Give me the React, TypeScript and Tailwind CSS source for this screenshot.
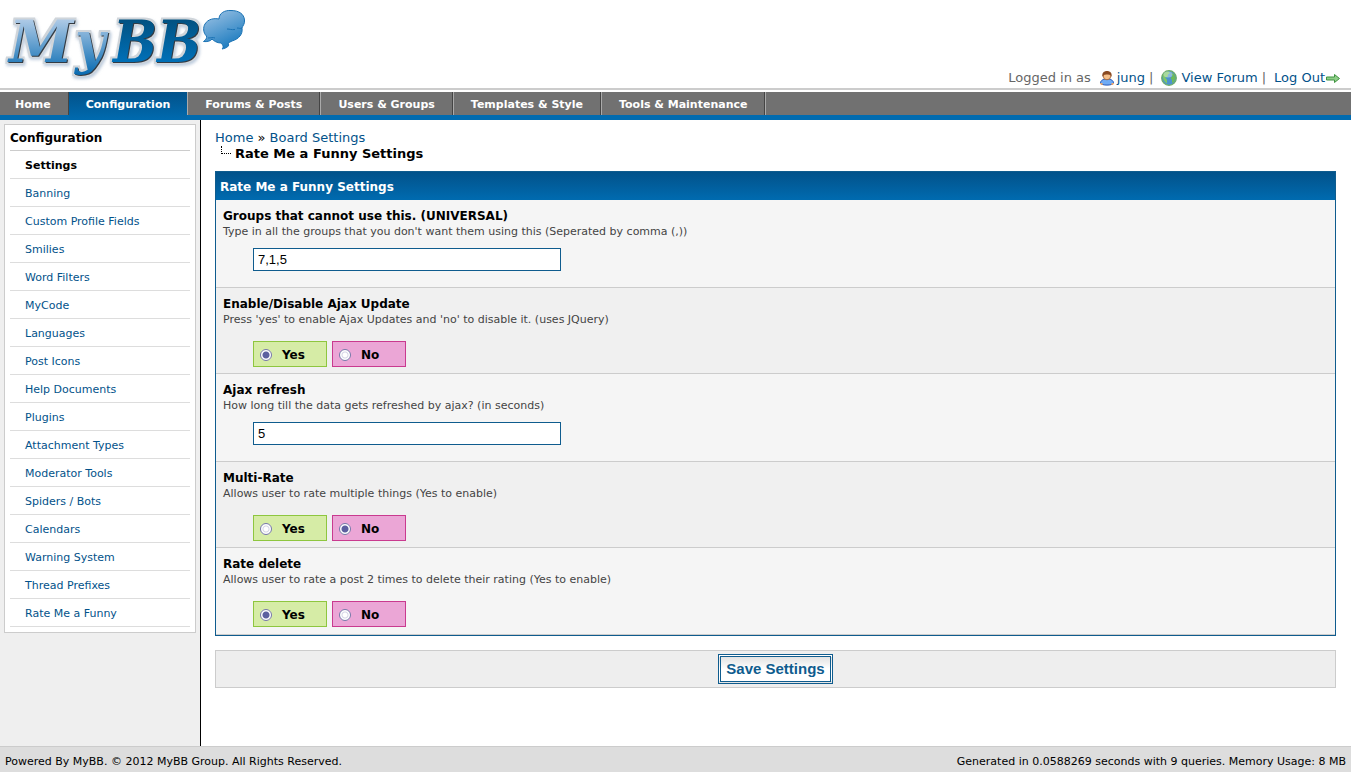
import React, { useState } from 'react';
import clsx from 'clsx';

const tabs = ['Home', 'Configuration', 'Forums & Posts', 'Users & Groups', 'Templates & Style', 'Tools & Maintenance'];

const menuItems = [
  'Settings',
  'Banning',
  'Custom Profile Fields',
  'Smilies',
  'Word Filters',
  'MyCode',
  'Languages',
  'Post Icons',
  'Help Documents',
  'Plugins',
  'Attachment Types',
  'Moderator Tools',
  'Spiders / Bots',
  'Calendars',
  'Warning System',
  'Thread Prefixes',
  'Rate Me a Funny',
];

interface Setting {
  id: string;
  title: string;
  description: string;
  type: 'text' | 'yesno';
  value: string;
}

const settings: Setting[] = [
  {
    id: 'groups',
    title: 'Groups that cannot use this. (UNIVERSAL)',
    description: "Type in all the groups that you don't want them using this (Seperated by comma (,))",
    type: 'text',
    value: '7,1,5',
  },
  {
    id: 'ajax',
    title: 'Enable/Disable Ajax Update',
    description: "Press 'yes' to enable Ajax Updates and 'no' to disable it. (uses JQuery)",
    type: 'yesno',
    value: 'yes',
  },
  {
    id: 'refresh',
    title: 'Ajax refresh',
    description: 'How long till the data gets refreshed by ajax? (in seconds)',
    type: 'text',
    value: '5',
  },
  {
    id: 'multirate',
    title: 'Multi-Rate',
    description: 'Allows user to rate multiple things (Yes to enable)',
    type: 'yesno',
    value: 'no',
  },
  {
    id: 'delete',
    title: 'Rate delete',
    description: 'Allows user to rate a post 2 times to delete their rating (Yes to enable)',
    type: 'yesno',
    value: 'yes',
  },
];

function Logo() {
  return (
    <svg width="250" height="84" viewBox="0 0 250 84" role="img" aria-label="MyBB">
      <defs>
        <linearGradient id="light" gradientUnits="userSpaceOnUse" x1="0" y1="18" x2="0" y2="74">
          <stop offset="0" stopColor="#b3cde8" />
          <stop offset="1" stopColor="#0a6cb2" />
        </linearGradient>
        <linearGradient id="dark" gradientUnits="userSpaceOnUse" x1="0" y1="18" x2="0" y2="62">
          <stop offset="0" stopColor="#02507f" />
          <stop offset="1" stopColor="#0070b8" />
        </linearGradient>
        <linearGradient id="bubble" x1="0" y1="0" x2="0.5" y2="1">
          <stop offset="0" stopColor="#a3c6e6" />
          <stop offset="1" stopColor="#1f7dc0" />
        </linearGradient>
        {/* Grey rim, dark edge at the lower right and a faint shadow */}
        <filter id="rim" filterUnits="userSpaceOnUse" x="0" y="0" width="250" height="84" colorInterpolationFilters="sRGB">
          <feMorphology in="SourceAlpha" operator="dilate" radius="2" result="wide" />
          <feGaussianBlur in="wide" stdDeviation="0.500" result="wideSoft" />
          <feFlood floodColor="#d0d5da" />
          <feComposite in2="wideSoft" operator="in" result="outline" />
          <feGaussianBlur in="wide" stdDeviation="1.500" />
          <feOffset dx="1" dy="2" result="cast" />
          <feFlood floodColor="#8fa9c6" floodOpacity="0.600" />
          <feComposite in2="cast" operator="in" result="shadow" />
          <feOffset in="SourceAlpha" dx="1" dy="1" result="moved" />
          <feFlood floodColor="#333b44" />
          <feComposite in2="moved" operator="in" result="edge" />
          <feMerge>
            <feMergeNode in="shadow" />
            <feMergeNode in="outline" />
            <feMergeNode in="edge" />
            <feMergeNode in="SourceGraphic" />
          </feMerge>
        </filter>
      </defs>
      <g filter="url(#rim)" className="font-['DejaVu_Serif_Condensed','DejaVu_Serif',serif] text-[58px] font-bold italic">
        <text x="9" y="62" fill="url(#light)" className="font-['DejaVu_Serif',serif]">M</text>
        <text x="75" y="62" fill="url(#light)">y</text>
        <text x="113" y="62" fill="url(#dark)">BB</text>
      </g>
      <path
        d="M219 19C219 13 225 10 231 10.500C239 10.500 244 14 244.500 20C245 24 242.500 26 242 28C243 34 239 39 232 41L228 43C230 46 227 48 222 49C224 47 223 45 221 43C217 43 214 41 212 39C211 41 207 42 203.500 41.500C206 40 207 38 206.500 36C203 33 203 27 205 24C208 19 214 18 219 19Z"
        fill="url(#bubble)"
        stroke="#1a72b4"
        strokeWidth="1"
      />
      <path d="M227 29C230 29 231 30 235 29.500M237 28C239 28 240 29 242 28M208 38C211 38 213 37 215 38" fill="none" stroke="#1a72b4" />
    </svg>
  );
}

function UserIcon() {
  return (
    <svg width="16" height="16" viewBox="0 0 16 16" aria-hidden="true">
      <path d="M1.500 13C1.500 10.500 4 9 8 9S14.500 10.500 14.500 13C13.500 15.800 2.500 15.800 1.500 13Z" fill="#6fabf5" stroke="#2858b8" />
      <path d="M1 13h2.500v2H2zM12.500 13H15l-1 2h-1.500z" fill="#eda66b" />
      <circle cx="8" cy="6" r="3.800" fill="#f6c08a" stroke="#9c5a2c" strokeWidth="0.800" />
      <path d="M3.500 7C2.500 3 5 1 8 1s5.500 2 4.500 6C12 5 11 4.300 8 4.500S4.500 5 3.500 7Z" fill="#8a4a22" />
    </svg>
  );
}

function GlobeIcon() {
  return (
    <svg width="16" height="16" viewBox="0 0 16 16" aria-hidden="true">
      <circle cx="8" cy="8" r="7.300" fill="#4d93cf" stroke="#6fae68" strokeWidth="1.300" />
      <path d="M2 5C3 3 5 1.500 7.500 1.500L9 3L7 4.500L6.500 7L4 7.500L6 9.500L6 13.500C3 12 1.500 9 2 5Z" fill="#7cc768" />
      <path d="M10 3L13 4L14.500 8L13 12L11 13L11 10L9.500 8L11.500 6Z" fill="#6cbb58" />
      <ellipse cx="7" cy="4.500" rx="4.500" ry="3" fill="#fff" opacity="0.350" />
    </svg>
  );
}

function ArrowIcon() {
  return (
    <svg width="16" height="16" viewBox="0 0 16 16" aria-hidden="true">
      <path d="M1.500 7H9.500V4.500L14.500 8.500L9.500 12.500V10H1.500Z" fill="#8fce88" stroke="#3f9440" strokeWidth="1" />
    </svg>
  );
}

function YesNo({ setting }: { setting: Setting }) {
  const [value, setValue] = useState(setting.value);
  return (
    <div className="flex gap-[5px] pt-[14px] pl-[30px]">
      {['yes', 'no'].map((option) => (
        <label
          key={option}
          className={clsx(
            'flex h-[26px] w-[74px] items-center border pt-[2px] pl-[6px] text-[12px] font-bold',
            option === 'yes' ? 'border-[#8ec63f] bg-[#d6eca6]' : 'border-[#c93a8f] bg-[#eba6d6]'
          )}
        >
          <input
            type="radio"
            name={setting.id}
            checked={value === option}
            onChange={() => setValue(option)}
            className="mr-[10px] h-3 w-3 appearance-none rounded-full border border-[#7576a8] bg-white bg-[radial-gradient(circle,#fff_2px,#d5d5e6_3px,#fff_4px)] checked:bg-[radial-gradient(circle,#5c5fa0_2px,#5c5fa0_3px,#fff_4px)]"
          />
          {option === 'yes' ? 'Yes' : 'No'}
        </label>
      ))}
    </div>
  );
}

export default function App() {
  return (
    <div className="flex min-h-screen flex-col bg-white font-['DejaVu_Sans',Verdana,sans-serif] text-[13px] leading-4 text-black">
      {/* Header */}
      <header className="flex h-[90px] items-start justify-between border-b-2 border-[#ccc]">
        <a href="#home">
          <Logo />
        </a>
        <div className="flex items-center self-end pr-[10px] pb-[2px] text-[#666]">
          <span className="mr-2">Logged in as</span>
          <a href="#jung" className="flex items-center gap-[2px] text-[#02528a]">
            <UserIcon />
            jung
          </a>
          <span className="mr-2 ml-1">|</span>
          <a href="#forum" className="flex items-center gap-1 text-[#02528a]">
            <GlobeIcon />
            View Forum
          </a>
          <span className="mr-2 ml-1">|</span>
          <a href="#logout" className="flex items-center text-[#02528a]">
            Log Out
            <ArrowIcon />
          </a>
        </div>
      </header>

      {/* Main tabs */}
      <nav className="mt-[2px] flex h-7 bg-[linear-gradient(#717171_23px,#006bb0_23px)] text-[11px] font-bold text-white">
        {tabs.map((tab) => (
          <a
            key={tab}
            href="#tab"
            className={clsx(
              'flex px-[17px] pt-[5px] first:pl-[15px]',
              tab === 'Configuration'
                ? 'bg-linear-to-b from-[#02528a] to-[#006bb0]'
                : 'h-[23px] border-r border-l border-r-[#444] border-l-[#aaa] first:border-l-0'
            )}
          >
            {tab}
          </a>
        ))}
        <span className="h-[23px] border-l border-[#aaa]" />
      </nav>

      <div className="flex grow">
        {/* Sidebar */}
        <aside className="w-[201px] shrink-0 border-r border-black bg-[#efefef] p-1 text-[11px]">
          <div className="border border-[#ccc] bg-white p-[5px]">
            <h2 className="border-b border-[#ccc] pb-1 text-[12px] font-bold">Configuration</h2>
            <ul>
              {menuItems.map((item, i) => (
                <li key={item} className="border-b border-[#ddd]">
                  <a href="#item" className={clsx('block pt-[6px] pb-1 pl-[15px] leading-[17px]', i === 0 ? 'font-bold' : 'text-[#02528a]')}>
                    {item}
                  </a>
                </li>
              ))}
            </ul>
          </div>
        </aside>

        {/* Page */}
        <main className="grow px-[15px] pt-[10px] pl-[14px]">
          <div>
            <a href="#home" className="text-[#02528a]">Home</a> » <a href="#board" className="text-[#02528a]">Board Settings</a>
          </div>
          <div className="flex pl-[6px] font-bold">
            <span className="mr-1 h-2 w-[10px] border-b border-l border-dotted border-black" />
            <h1>Rate Me a Funny Settings</h1>
          </div>

          <form onSubmit={(e) => e.preventDefault()}>
            <div className="mt-[9px] border border-[#0f5c8e]">
              <h2 className="bg-linear-to-b from-[#02528a] to-[#006bb0] px-1 pt-[7px] pb-[5px] text-[12px] font-bold text-white">
                Rate Me a Funny Settings
              </h2>
              {settings.map((s) => (
                <div
                  key={s.id}
                  className={clsx(
                    'border-b border-[#ccc] px-[7px] pt-2',
                    s.type === 'text' ? 'bg-[#f5f5f5] pb-4' : 'bg-[#f0f0f0] pb-[6px] last:bg-[#f5f5f5] last:pb-[7px]'
                  )}
                >
                  <label htmlFor={s.type === 'text' ? s.id : undefined} className="block text-[12px] font-bold">
                    {s.title}
                  </label>
                  <p className="text-[11px] leading-[15px] text-[#444]">{s.description}</p>
                  {s.type === 'text' ? (
                    <div className="pt-[9px] pl-[30px]">
                      <input
                        id={s.id}
                        type="text"
                        defaultValue={s.value}
                        className="block h-[23px] w-[308px] border border-[#0f5c8e] bg-white px-1 font-['Liberation_Sans',Arial,sans-serif] text-[13px]"
                      />
                    </div>
                  ) : (
                    <YesNo setting={s} />
                  )}
                </div>
              ))}
            </div>

            <div className="mt-[14px] flex justify-center border border-[#ccc] bg-[#eee] py-[3px]">
              <button
                type="submit"
                className="h-[30px] border-[3px] border-double border-[#0f5c8e] bg-linear-to-b from-[#e2e2e2] to-white to-50% px-[5px] font-['Liberation_Sans',Arial,sans-serif] text-[15px] font-bold text-[#0f5c8e]"
              >
                Save Settings
              </button>
            </div>
          </form>
        </main>
      </div>

      {/* Footer */}
      <footer className="flex h-[26px] items-center justify-between border-t border-[#ccc] bg-[#ddd] px-[5px] pt-1 text-[11px]">
        <span>Powered By MyBB. © 2012 MyBB Group. All Rights Reserved.</span>
        <span>Generated in 0.0588269 seconds with 9 queries. Memory Usage: 8 MB</span>
      </footer>
    </div>
  );
}
